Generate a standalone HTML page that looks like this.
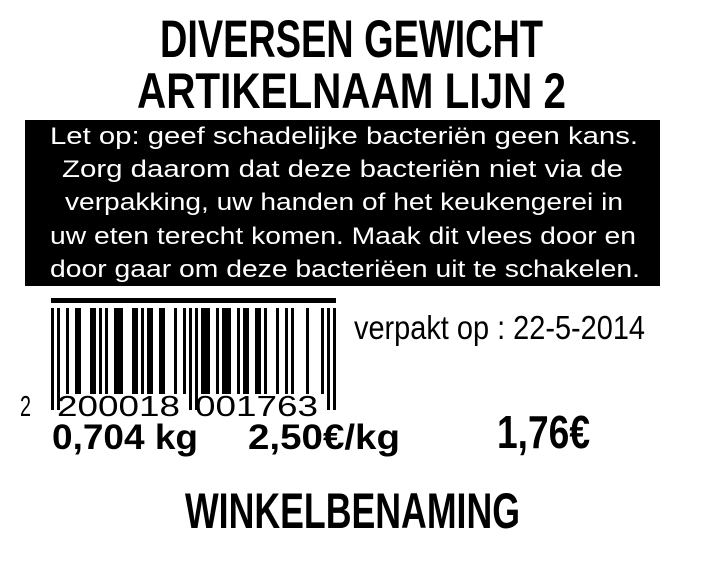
<!DOCTYPE html>
<html><head><meta charset="utf-8"><style>
html,body{margin:0;padding:0;background:#fff;}
svg{display:block;}
text{font-family:"Liberation Sans",sans-serif;}
</style></head><body>
<svg width="712" height="579" viewBox="0 0 712 579" xmlns="http://www.w3.org/2000/svg">
<rect width="712" height="579" fill="#fff"/>
<text x="160" y="57" font-size="53" font-weight="bold" textLength="383" lengthAdjust="spacingAndGlyphs">DIVERSEN GEWICHT</text>
<text x="137" y="108" font-size="50" font-weight="bold" textLength="429" lengthAdjust="spacingAndGlyphs">ARTIKELNAAM LIJN 2</text>
<rect x="25" y="120" width="635" height="166" fill="#000"/>
<g fill="#fff" font-size="24">
<text x="50" y="144" textLength="588" lengthAdjust="spacingAndGlyphs">Let op: geef schadelijke bacteriën geen kans.</text>
<text x="62" y="177" textLength="561" lengthAdjust="spacingAndGlyphs">Zorg daarom dat deze bacteriën niet via de</text>
<text x="65" y="210" textLength="558" lengthAdjust="spacingAndGlyphs">verpakking, uw handen of het keukengerei in</text>
<text x="50" y="244" textLength="586" lengthAdjust="spacingAndGlyphs">uw eten terecht komen. Maak dit vlees door en</text>
<text x="50" y="277" textLength="590" lengthAdjust="spacingAndGlyphs">door gaar om deze bacteriëen uit te schakelen.</text>
</g>
<rect x="51" y="298" width="285" height="5" fill="#000"/>
<g fill="#000">
<rect x="51" y="308" width="3" height="102"/><rect x="57" y="308" width="3" height="102"/>
<rect x="66" y="308" width="3" height="86"/><rect x="75" y="308" width="6" height="86"/>
<rect x="90" y="308" width="6" height="86"/><rect x="99" y="308" width="3" height="86"/>
<rect x="105" y="308" width="3" height="86"/><rect x="114" y="308" width="9" height="86"/>
<rect x="132" y="308" width="6" height="86"/><rect x="141" y="308" width="3" height="86"/>
<rect x="147" y="308" width="6" height="86"/><rect x="159" y="308" width="6" height="86"/>
<rect x="174" y="308" width="3" height="86"/><rect x="183" y="308" width="3" height="86"/>
<rect x="189" y="308" width="3" height="102"/><rect x="195" y="308" width="3" height="102"/>
<rect x="201" y="308" width="9" height="86"/><rect x="216" y="308" width="3" height="86"/>
<rect x="222" y="308" width="9" height="86"/><rect x="237" y="308" width="3" height="86"/>
<rect x="243" y="308" width="6" height="86"/><rect x="255" y="308" width="6" height="86"/>
<rect x="264" y="308" width="3" height="86"/><rect x="276" y="308" width="3" height="86"/>
<rect x="285" y="308" width="3" height="86"/><rect x="291" y="308" width="3" height="86"/>
<rect x="306" y="308" width="3" height="86"/><rect x="321" y="308" width="3" height="86"/>
<rect x="327" y="308" width="3" height="102"/><rect x="333" y="308" width="3" height="102"/>
</g>
<g font-size="29">
<text x="20" y="416" textLength="11" lengthAdjust="spacingAndGlyphs">2</text>
<text x="57" y="416" textLength="123" lengthAdjust="spacingAndGlyphs">200018</text>
<text x="195" y="416" textLength="123" lengthAdjust="spacingAndGlyphs">001763</text>
</g>
<text x="354" y="339" font-size="33" textLength="291" lengthAdjust="spacingAndGlyphs">verpakt op : 22-5-2014</text>
<text x="52" y="449" font-size="35" font-weight="bold" textLength="146" lengthAdjust="spacingAndGlyphs">0,704 kg</text>
<text x="248" y="449" font-size="35" font-weight="bold" textLength="152" lengthAdjust="spacingAndGlyphs">2,50€/kg</text>
<text x="497" y="448" font-size="46" font-weight="bold" textLength="93" lengthAdjust="spacingAndGlyphs">1,76€</text>
<text x="185" y="528" font-size="50" font-weight="bold" textLength="335" lengthAdjust="spacingAndGlyphs">WINKELBENAMING</text>
</svg>
</body></html>
